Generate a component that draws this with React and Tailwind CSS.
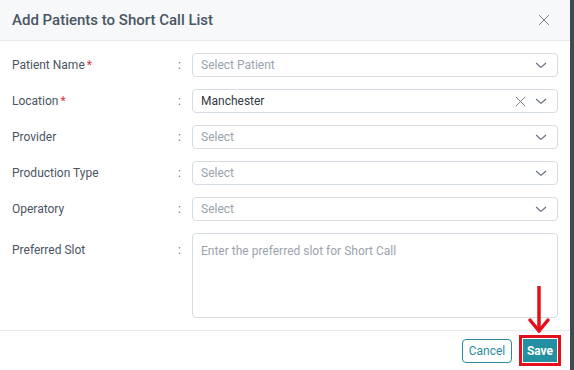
import React from "react";

const Chevron = () => (
  <svg width="14" height="14" viewBox="0 0 24 24" fill="none" stroke="#5b6777" strokeWidth="1.8" strokeLinecap="round" strokeLinejoin="round">
    <path d="M4 9l8 7 8-7" />
  </svg>
);

const XIcon = ({ size = 14, color = "#5b6777", sw = 1.6 }) => (
  <svg width={size} height={size} viewBox="0 0 24 24" fill="none" stroke={color} strokeWidth={sw} strokeLinecap="round">
    <path d="M5 5l14 14M19 5L5 19" />
  </svg>
);

function Row({ label, required, children }) {
  return (
    <div className="flex items-center h-[24px]">
      <div className="w-[166px] text-[12px] text-[#4b5563]">
        {label}
        {required && <span className="text-[#dc3545] ml-[2px]">*</span>}
      </div>
      <div className="w-[14px] text-[12px] text-[#6b7280]">:</div>
      <div className="flex-1">{children}</div>
    </div>
  );
}

function Select({ value, placeholder, clearable }) {
  return (
    <div className="h-[24px] border border-[#d6dce4] rounded-[4px] flex items-center pl-[8px] pr-[9px] bg-white">
      <span className={"flex-1 text-[12px] " + (value ? "text-[#333a44]" : "text-[#9aa3ae]")}>
        {value || placeholder}
      </span>
      {clearable && (
        <span className="mr-[6px] flex">
          <XIcon size={15} color="#6b7280" sw={1.4} />
        </span>
      )}
      <Chevron />
    </div>
  );
}

export default function App() {
  return (
    <div className="w-[574px] h-[370px] bg-[#3f4a55] flex" style={{ fontFamily: "Roboto, 'Liberation Sans', sans-serif" }}>
      <div className="w-[570px] h-[370px] bg-white flex flex-col">
        <div className="h-[41px] bg-[#f6f8fa] border-b border-[#e6e9ed] flex items-center pl-[12px] pr-[18px]">
          <div className="flex-1 text-[15px] font-medium text-[#4a5563]">Add Patients to Short Call List</div>
          <XIcon size={16} color="#6b7280" sw={1.4} />
        </div>
        <div className="flex flex-col gap-[12px] pl-[12px] pr-[12px] pt-[12px] h-[289px]">
          <Row label="Patient Name" required><Select placeholder="Select Patient" /></Row>
          <Row label="Location" required><Select value="Manchester" clearable /></Row>
          <Row label="Provider"><Select placeholder="Select" /></Row>
          <Row label="Production Type"><Select placeholder="Select" /></Row>
          <Row label="Operatory"><Select placeholder="Select" /></Row>
          <div className="flex items-start">
            <div className="w-[166px] text-[12px] text-[#4b5563] pt-[8px]">Preferred Slot</div>
            <div className="w-[14px] text-[12px] text-[#6b7280] pt-[8px]">:</div>
            <div className="flex-1 h-[85px] border border-[#d6dce4] rounded-[4px] px-[8px] pt-[8px] text-[12px] text-[#9aa3ae]">
              Enter the preferred slot for Short Call
            </div>
          </div>
        </div>
        <div className="relative flex-1 border-t border-[#e6e9ed] flex items-center justify-end pr-[9px] gap-[7px]">
          <div className="h-[24px] w-[50px] border border-[#2a8c9e] rounded-[4px] flex items-center justify-center text-[12px] text-[#2a8c9e]">
            Cancel
          </div>
          <div className="border-[3px] border-[#e3101b] p-[1px] bg-white">
            <div className="h-[23px] w-[34px] bg-[#238fa0] flex items-center justify-center text-[12px] font-bold text-white">
              Save
            </div>
          </div>
          <svg className="absolute left-[528px] top-[-45px]" width="22" height="50" viewBox="0 0 22 50">
            <path d="M11 1v44" stroke="#e3101b" strokeWidth="3.5" strokeLinecap="round" />
            <path d="M2 34l9 11 9-11" fill="none" stroke="#e3101b" strokeWidth="3.5" strokeLinecap="round" strokeLinejoin="round" />
          </svg>
        </div>
      </div>
    </div>
  );
}
